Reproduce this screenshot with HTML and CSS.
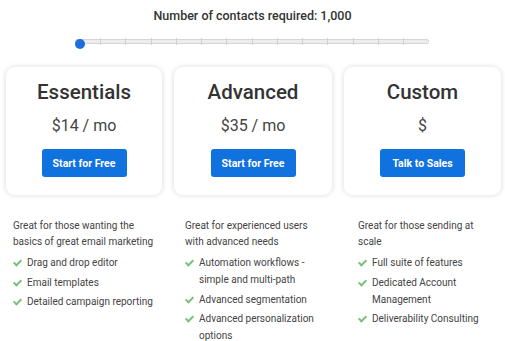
FILE: index.html
```html
<!DOCTYPE html>
<html lang="en">
<head>
    <meta charset="UTF-8">
    <meta name="viewport" content="width=device-width, initial-scale=1.0">
    <title>Pricing</title>
    <link rel="stylesheet" href="styles.css">
</head>
<body>
<div class="contacts">
    <h2>Number of contacts required: 1,000</h2>
    <div class="slider">
        <div class="track">
            <span></span><span></span><span></span><span></span><span></span><span></span><span></span><span></span><span></span><span></span><span></span><span></span><span></span>
        </div>
        <div class="thumb"></div>
    </div>
</div>

<div class="planes">
    <div class="plan">
        <h3>Essentials</h3>
        <p class="precio">$14 / mo</p>
        <button>Start for Free</button>
    </div>
    <div class="plan">
        <h3>Advanced</h3>
        <p class="precio">$35 / mo</p>
        <button>Start for Free</button>
    </div>
    <div class="plan">
        <h3>Custom</h3>
        <p class="precio">$</p>
        <button>Talk to Sales</button>
    </div>
</div>

<div class="detalles">
    <div class="detalle">
        <p>Great for those wanting the basics of great email marketing</p>
        <ul>
            <li>Drag and drop editor</li>
            <li>Email templates</li>
            <li>Detailed campaign reporting</li>
        </ul>
    </div>
    <div class="detalle">
        <p>Great for experienced users with advanced needs</p>
        <ul>
            <li>Automation workflows - simple and multi-path</li>
            <li>Advanced segmentation</li>
            <li>Advanced personalization options</li>
        </ul>
    </div>
    <div class="detalle">
        <p>Great for those sending at scale</p>
        <ul>
            <li>Full suite of features</li>
            <li>Dedicated Account Management</li>
            <li>Deliverability Consulting</li>
        </ul>
    </div>
</div>
</body>
</html>
```

FILE: styles.css
```css
body { font-family: Roboto, "Liberation Sans", sans-serif; margin: 0; padding: 0; background: #fff; color: #333; }
.contacts { text-align: center; padding-top: 8px; }
.contacts h2 { font-size: 12.5px; font-weight: 500; margin: 0; line-height: 16px; color: #333; }
.slider { position: relative; width: 354px; margin: 15px 0 0 75px; height: 10px; }
.track { margin-top: 3px; height: 3px; border: 1px solid #d6d6d6; background: #ececec; border-radius: 2px; display: flex; justify-content: space-between; padding: 0 24px 0 24px; }
.track span { width: 1px; height: 7px; margin-top: -2px; background: #d0d0d0; }
.thumb { position: absolute; left: 0; top: 0; width: 10px; height: 10px; border-radius: 50%; background: #1a6fdc; }
.planes { display: grid; grid-template-columns: 158px 160px 159px; gap: 10px; padding: 0 5px; margin-top: 17px; }
.plan { height: 130px; border-radius: 10px; box-shadow: 0 0 4px rgba(0,0,0,0.12); border: 1px solid #f0f0f0; box-sizing: border-box; text-align: center; padding-top: 12px; }
.plan h3 { font-size: 20.5px; font-weight: 500; margin: 0; line-height: 26px; color: #333; }
.precio { font-size: 16px; font-weight: 400; margin: 11px 0 0; line-height: 20px; color: #444; }
.plan button { display: block; margin: 13px auto 0; width: 85px; height: 28px; border: none; border-radius: 3px; background: #0f72de; color: #fff; font-family: inherit; font-size: 10.5px; font-weight: 700; }
.detalles { display: grid; grid-template-columns: 172px 173px 1fr; padding-left: 13px; margin-top: 22px; }
.detalle { max-width: 146px; }
.detalle:nth-child(2) { max-width: 136px; }
.detalle:nth-child(3) { max-width: 130px; }
.detalle p { margin: 0; font-size: 10px; line-height: 16px; color: #444; }
.detalle ul { list-style: none; margin: 4px 0 0; padding: 0; }
.detalle li { position: relative; padding-left: 14px; font-size: 10px; line-height: 17px; color: #444; margin-bottom: 2.5px; }
.detalle li::before { content: ""; position: absolute; left: 2px; top: 4px; width: 3px; height: 6px; border: solid #76c076; border-width: 0 2px 2px 0; transform: rotate(45deg); }
```
